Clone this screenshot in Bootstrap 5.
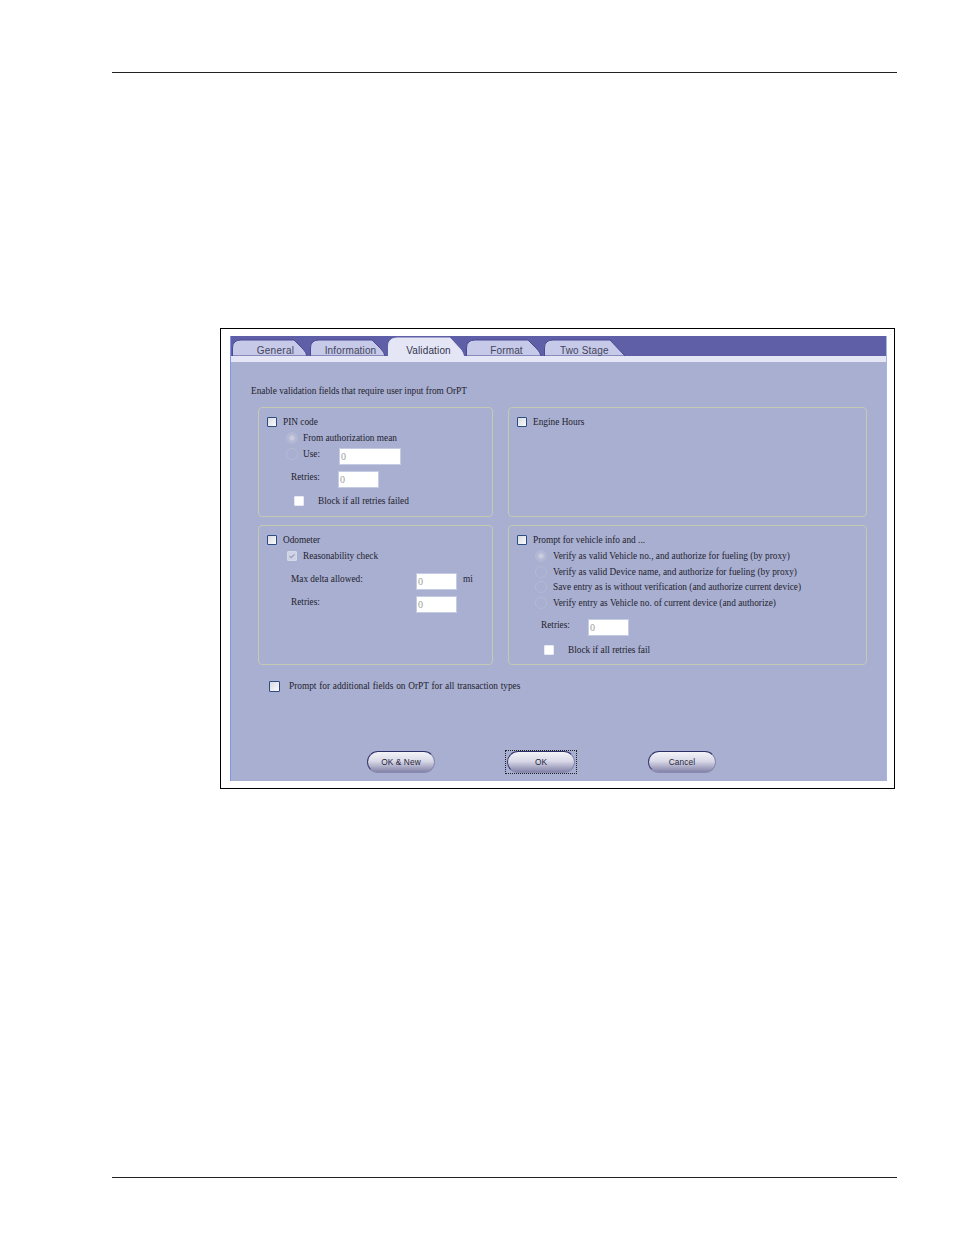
<!DOCTYPE html>
<html lang="en"><head><meta charset="utf-8"><title>Validation</title>
<link rel="stylesheet" href="https://cdn.jsdelivr.net/npm/bootstrap@5.3.0/dist/css/bootstrap.min.css">
<style>
html,body{background:#fff;}
body{font-family:"Liberation Serif",serif;font-size:9.3px;color:#23232f;margin:0;}
.sheet{width:785px;margin-left:112px;padding-top:72px;}
.rule{height:1px;background:#222;}
.shot{width:675px;height:461px;margin:255px 0 388px 108px;border:1px solid #000;padding:7px 7px 7px 9px;}
.dlg{height:445px;display:flex;flex-direction:column;background:#a9afd0;border-left:1px solid #7a9be0;border-right:1px solid #9fb6e6;}
.tabbar{height:20px;background:#5f5fa8;padding-left:1px;gap:2px;flex-wrap:nowrap;border:0;}
.tabx{position:relative;width:76px;height:20px;display:flex;align-items:center;justify-content:center;font:10px "Liberation Sans",sans-serif;letter-spacing:.15px;color:#44445a;padding:8px 0 0 5px;white-space:nowrap;}
.tabx.first{padding-left:11px;letter-spacing:.3px;}
.tabx.wide{width:82px;padding:8px 0 0 16px;justify-content:flex-start;}
.tabx.on{color:#33334a;}
.tabx svg{position:absolute;left:0;top:0;width:100%;height:100%;}
.tabx span{position:relative;}
.strip{height:6px;background:#e4e6f6;}
.intro{height:16px;line-height:16px;margin:21px 0 0 20px;}
.grp{border:1px solid #c4c9b4;border-radius:4px;padding:6px 0 0 8px;}
.grprow{display:flex;gap:15px;margin-left:27px;}
.r1{height:110px;margin-top:8px;}
.r2{height:140px;margin-top:8px;}
.w1{width:235px;}.w2{width:359px;}
.ln{display:flex;align-items:center;height:16px;line-height:16px;white-space:nowrap;}
.ln.top{align-items:flex-start;}
.bx.form-check-input{width:10px;height:10px;margin:0;flex:none;border:1px solid #2c4d80;border-radius:1px;background:linear-gradient(135deg,#d8dae2,#fbfbfd);box-shadow:none;opacity:1;float:none;}
.bx.plain.form-check-input{border-color:#e8e9f2;background:#fff;}
.bx.done.form-check-input{margin-left:1px;border-color:#d5d8e8;background:#cfd3e6 url("data:image/svg+xml,%3Csvg xmlns='http://www.w3.org/2000/svg' viewBox='0 0 10 10'%3E%3Cpath d='M2 5l2 2 4-4' fill='none' stroke='%23989cb4' stroke-width='1.4'/%3E%3C/svg%3E") center/contain no-repeat;}
.rd.form-check-input{width:12px;height:12px;margin:0;flex:none;float:none;border:1px solid #b4b9d4;border-radius:50%;background:#a9afd0;opacity:1;box-shadow:none;}
.rd.sel.form-check-input{background:radial-gradient(circle,#c8ccdc 0 2px,#b6bbd6 3px,#aeb3d2 6px);}
.tf.form-control{font:10px "Liberation Serif",serif;color:#9a9a9a;background:#fff;border:1px solid #c3cce2;border-radius:0;padding:1px;min-height:0;height:17px;opacity:1;}
.t1{width:62px;}.t2{width:41px;}
.lb1{margin-left:6px;}
.lb2{margin-left:5px;}
.in1{padding-left:19px;}
.use{height:19px;}
.use .tf.form-control{margin:2px 0 0 19px;}
.use .rd{margin-top:2px;}
.rr1{height:17px;margin-top:6px;padding-left:24px;}
.rr1 .lab{width:47px;margin-top:-2px;}
.blk{margin-top:5px;padding-left:27px;}
.blk .lab{margin-left:14px;}
.odo{height:17px;padding-left:24px;}
.odo .lab{width:125px;}
.odo .unit{margin-left:6px;}
.o1{margin-top:9px;}.o2{margin-top:6px;}
.o1 .lab,.o1 .unit{margin-top:-5px;}
.o2 .lab{margin-top:-5px;}
.opt{padding-left:18px;height:15.75px;}
.opt .rd.form-check-input{margin-right:6px;}
.rr4{height:17px;margin-top:8px;padding-left:24px;}
.rr4 .lab{width:47px;margin-top:-2px;}
.blk2{margin-top:6px;padding-left:27px;}
.blk2 .lab{margin-left:14px;}
.addl{margin:13px 0 0 38px;height:16px;}
.addl .bx.form-check-input{width:11px;height:11px;}
.addl .lab{margin-left:9px;word-spacing:.45px;}
.acts{margin:56px 0 0 136px;gap:72px;height:24px;align-items:center;}
.pill.btn{width:68px;height:22px;padding:0;border-radius:11px;font:8.3px "Liberation Sans",sans-serif;letter-spacing:.1px;color:#26263a;border:1px solid #8a8ab0;border-top-color:#2e2e66;border-left-color:#3a3a70;background:linear-gradient(#f3f3f8,#d9d9e8 45%,#8383a8);box-shadow:none;}
.pill.btn.endb{margin-left:1px;}
.focusb{border:1px dotted #222;padding:0 1px;margin:0 -2px;display:flex;align-items:center;height:24px;}
</style></head><body>
<div class="sheet">
<div class="rule"></div>
<div class="shot"><div class="dlg">
<ul class="nav nav-tabs tabbar">
<li class="nav-item"><a class="tabx first text-decoration-none"><svg viewBox="0 0 76 20"><path d="M.5 20V12Q.5 4 9 4H62L71 13Q74 16 75 20Z" fill="#c6c9e8" stroke="#4a4a90"/></svg><span>General</span></a></li>
<li class="nav-item"><a class="tabx text-decoration-none"><svg viewBox="0 0 76 20"><path d="M.5 20V12Q.5 4 9 4H62L71 13Q74 16 75 20Z" fill="#c6c9e8" stroke="#4a4a90"/></svg><span>Information</span></a></li>
<li class="nav-item"><a class="tabx on text-decoration-none"><svg viewBox="0 0 76 20"><path d="M.5 20V10Q.5 2 9 2H62L73 14Q75 17 75.500 20Z" fill="#e4e6f6" stroke="#e4e6f6"/></svg><span>Validation</span></a></li>
<li class="nav-item"><a class="tabx text-decoration-none"><svg viewBox="0 0 76 20"><path d="M.5 20V12Q.5 4 9 4H62L71 13Q74 16 75 20Z" fill="#c6c9e8" stroke="#4a4a90"/></svg><span>Format</span></a></li>
<li class="nav-item"><a class="tabx wide text-decoration-none"><svg viewBox="0 0 82 20"><path d="M.5 20V12Q.5 4 9 4H66L81 20Z" fill="#c6c9e8" stroke="#4a4a90"/></svg><span>Two Stage</span></a></li>
</ul>
<div class="strip"></div>
<div class="intro">Enable validation fields that require user input from OrPT</div>
<div class="grprow r1">
 <div class="grp w1">
  <div class="ln"><input class="form-check-input bx" type="checkbox"><span class="lb1">PIN code</span></div>
  <div class="ln in1"><input class="form-check-input rd sel" type="radio" disabled><span class="lb2">From authorization mean</span></div>
  <div class="ln top in1 use"><input class="form-check-input rd" type="radio" disabled><span class="lb2">Use:</span><input class="form-control tf t1" value="0" disabled></div>
  <div class="ln top rr1"><span class="lab">Retries:</span><input class="form-control tf t2" value="0" disabled></div>
  <div class="ln blk"><input class="form-check-input bx plain" type="checkbox"><span class="lab">Block if all retries failed</span></div>
 </div>
 <div class="grp w2">
  <div class="ln"><input class="form-check-input bx" type="checkbox"><span class="lb1">Engine Hours</span></div>
 </div>
</div>
<div class="grprow r2">
 <div class="grp w1">
  <div class="ln"><input class="form-check-input bx" type="checkbox"><span class="lb1">Odometer</span></div>
  <div class="ln in1"><input class="form-check-input bx done" type="checkbox" checked disabled><span class="lb1">Reasonability check</span></div>
  <div class="ln odo o1"><span class="lab">Max delta allowed:</span><input class="form-control tf t2" value="0" disabled><span class="unit">mi</span></div>
  <div class="ln odo o2"><span class="lab">Retries:</span><input class="form-control tf t2" value="0" disabled></div>
 </div>
 <div class="grp w2">
  <div class="ln"><input class="form-check-input bx" type="checkbox"><span class="lb1">Prompt for vehicle info and ...</span></div>
  <div class="ln opt"><input class="form-check-input rd sel" type="radio" disabled><span>Verify as valid Vehicle no., and authorize for fueling (by proxy)</span></div>
  <div class="ln opt"><input class="form-check-input rd" type="radio" disabled><span>Verify as valid Device name, and authorize for fueling (by proxy)</span></div>
  <div class="ln opt"><input class="form-check-input rd" type="radio" disabled><span>Save entry as is without verification (and authorize current device)</span></div>
  <div class="ln opt"><input class="form-check-input rd" type="radio" disabled><span>Verify entry as Vehicle no. of current device (and authorize)</span></div>
  <div class="ln top rr4"><span class="lab">Retries:</span><input class="form-control tf t2" value="0" disabled></div>
  <div class="ln blk2"><input class="form-check-input bx plain" type="checkbox"><span class="lab">Block if all retries fail</span></div>
 </div>
</div>
<div class="ln addl"><input class="form-check-input bx" type="checkbox"><span class="lab">Prompt for additional fields on OrPT for all transaction types</span></div>
<div class="d-flex acts">
 <button class="btn pill" type="button">OK &amp; New</button>
 <span class="focusb"><button class="btn pill" type="button">OK</button></span>
 <button class="btn pill endb" type="button">Cancel</button>
</div>
</div></div>
<div class="rule"></div>
</div>
</body></html>
